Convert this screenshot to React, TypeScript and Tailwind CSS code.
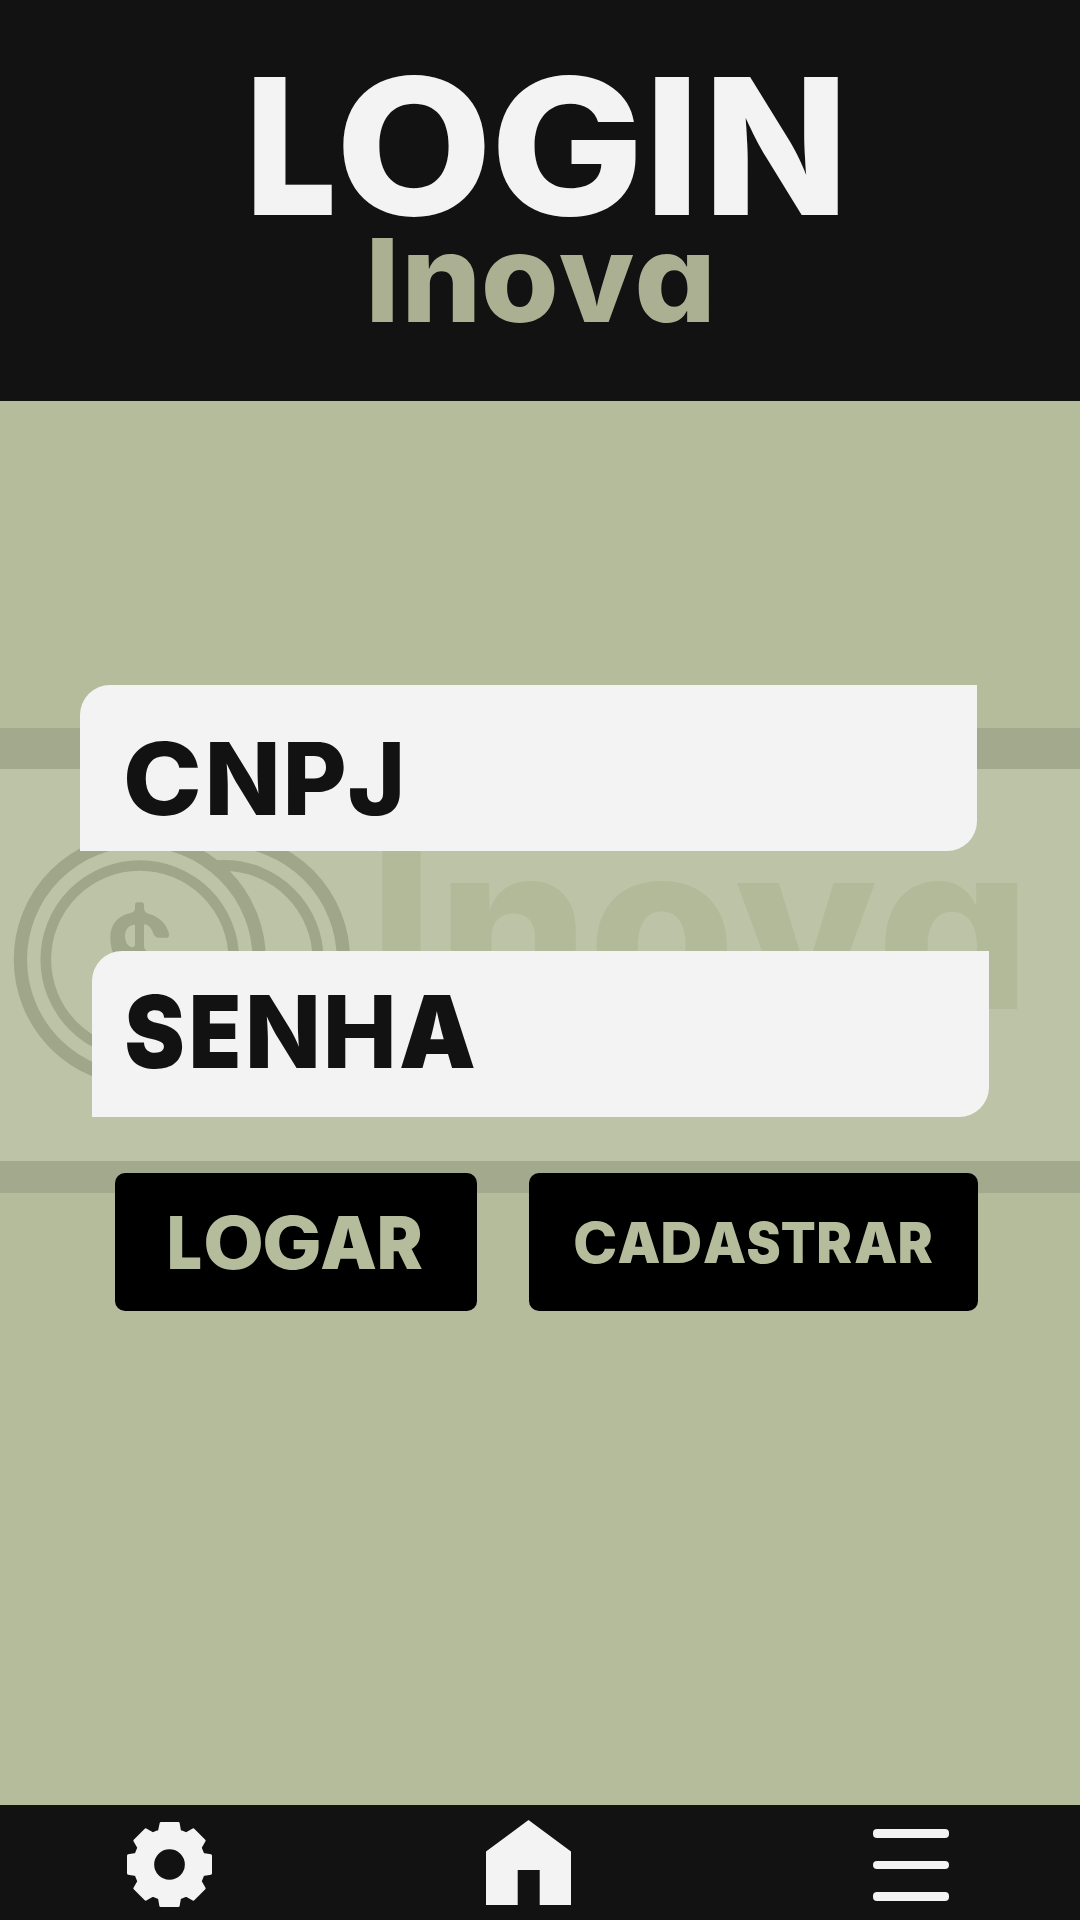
import React from "react";

// Side bearings of the ink in Inter, in em: [left, right] for each weight in use.
const INK: Record<number, Record<string, [number, number]>> = {
  800: {
    O: [0.038, 0.735], G: [0.038, 0.712], I: [0.055, 0.231], N: [0.055, 0.711],
    n: [0.053, 0.58], o: [0.033, 0.586], v: [0.01, 0.605], a: [0.03, 0.583],
    C: [0.04, 0.71], P: [0.055, 0.62], J: [0.025, 0.535], S: [0.035, 0.625],
    H: [0.055, 0.695], A: [0.02, 0.75], R: [0.055, 0.645], D: [0.055, 0.685],
    T: [0.03, 0.645],
  },
  900: { L: [0.045, 0.54], E: [0.045, 0.575], S: [0.027, 0.64], A: [0.02, 0.775], R: [0.045, 0.66] },
};

const HEAVY = Object.keys(INK[900]);

// One letter of a wordmark: character, left edge and right edge in pixels.
type Letter = [string, number, number];

type WordProps = { letters: Letter[]; size: number; className: string; xHeight?: number };

function Word({ letters, size, className, xHeight = 1 }: WordProps) {
  return (
    <span className={`flex shrink-0 whitespace-nowrap leading-none ${className}`}>
      {letters.map(([char, left, right], i) => {
        const heavy = HEAVY.includes(char);
        const [l, r] = INK[heavy ? 900 : 800][char];
        const sx = (right - left) / ((r - l) * size);
        const sy = char >= "a" ? xHeight : 1;
        const next = i + 1 < letters.length ? letters[i + 1][1] : right;
        return (
          <span
            key={i}
            className={`block origin-[0_86.4%] ${heavy ? "font-black" : "font-extrabold"}`}
            style={{
              width: next - left,
              transform: `translateX(${-l * size * sx}px) scale(${sx}, ${sy})`,
            }}
          >
            {char}
          </span>
        );
      })}
    </span>
  );
}

const LOGIN: Letter[] = [["L", 254.1, 332], ["O", 343.1, 485.1], ["G", 498.2, 636.1], ["I", 654.9, 689.2], ["N", 714.1, 838.2]];
const INOVA: Letter[] = [["I", 372, 392.9], ["n", 408.4, 474.9], ["o", 485.1, 554.9], ["v", 559.8, 632.9], ["a", 638.2, 709.2]];
const INOVA_LARGE: Letter[] = [["I", 382, 421], ["n", 450, 576], ["o", 596.3, 727.7], ["v", 736.6, 874.4], ["a", 884, 1017.6]];
const CNPJ: Letter[] = [["C", 127.4, 198.7], ["N", 210.4, 275.8], ["P", 288.2, 344], ["J", 350.5, 400.5]];
const SENHA: Letter[] = [["S", 127.1, 182.5], ["E", 193.2, 238], ["N", 250.3, 316.1], ["H", 327.8, 391.5], ["A", 400.8, 473.8]];
const LOGAR: Letter[] = [["L", 169.8, 200.1], ["O", 203.9, 259], ["G", 264.1, 317.8], ["A", 320.9, 374.7], ["R", 380.2, 422.2]];
const CADASTRAR: Letter[] = [
  ["C", 575.1, 615.1], ["A", 617.6, 658.3], ["D", 663.1, 700.1], ["A", 703.8, 744.9], ["S", 747.9, 779.3],
  ["T", 781.9, 814.1], ["R", 818.9, 851.5], ["A", 855.2, 896.2], ["R", 900.3, 932.5],
];

function Coins() {
  return (
    <svg viewBox="0 820 360 280" className="absolute left-0 top-[92px] h-[280px] w-[360px]" fill="none" stroke="#a0a68a">
      <circle cx="224" cy="959.5" r="119.4" strokeWidth="13.3" />
      <circle cx="224" cy="959.5" r="94" strokeWidth="11" />
      <circle cx="139.8" cy="959.5" r="119.4" strokeWidth="13.3" fill="#bcc3a7" />
      <circle cx="139.8" cy="959.5" r="94" strokeWidth="10.7" />
      <path
        transform="translate(0 845) scale(.33333)"
        stroke="none"
        fill="#a0a68a"
        fillRule="evenodd"
        d="M405 190V180Q405 172 412 172H425Q432 172 432 180V190Q433 202 444 206C476 213 499 235 507 266Q509 278 499 278H474Q466 278 461 268C455 250 446 239 432 238V304Q433 315 443 320V340H350C334 320 331 300 331 272C332 235 360 209 392 204Q405 201 405 190ZM405 239C385 239 375 256 375 273C375 292 385 306 397 307Q405 307 405 298Z"
      />
    </svg>
  );
}

function GearIcon() {
  return (
    <svg viewBox="0 0 255 255" className="h-[85px] w-[85px]">
      <path
        fill="#f3f3f3"
        stroke="#f3f3f3"
        strokeWidth="8"
        strokeLinejoin="round"
        d="M102 4L154 4L158 27L178 35L199 23L232 56L220 77L228 97L251 101L251 154L228 158L220 178L232 199L199 232L178 220L158 228L154 251L101 251L97 228L77 220L56 232L23 199L35 178L27 158L4 154L4 101L27 97L35 77L23 56L56 23L77 35L97 27Z"
      />
      <circle cx="127.5" cy="127.5" r="46" fill="#121212" />
    </svg>
  );
}

function HomeIcon() {
  return (
    <svg viewBox="0 0 85 85" className="h-[85px] w-[85px]">
      <path fill="#f3f3f3" d="M42.5 0L85 31.5V85H53.7V50H31.7V85H0V31.5Z" />
    </svg>
  );
}

export default function App() {
  return (
    <div className="flex h-[1920px] w-[1080px] flex-col overflow-hidden bg-[#b5bc9b] font-['Inter',sans-serif] [font-feature-settings:'cv11'] [font-kerning:none]">
      <header className="flex h-[401px] flex-col bg-[#121212] pt-[51px]">
        <h1 className="pl-[254px]">
          <Word letters={LOGIN} size={190} className="text-[190px] text-[#f3f3f3]" />
        </h1>
        <h2 className="mt-[-19px] pl-[372px]">
          <Word letters={INOVA} size={116} xHeight={1.058} className="text-[116px] text-[#aab091]" />
        </h2>
      </header>

      <main className="relative h-[1404px]">
        <div className="absolute inset-x-0 top-[327px] h-[465px] border-t-[41px] border-b-[32px] border-[#a3a98d] bg-[#bcc3a7]" />
        <div className="absolute inset-x-0 top-[327px] h-[465px]">
          <Coins />
          <div className="pl-[382px] pt-[93px]">
            <Word letters={INOVA_LARGE} size={218} xHeight={1.061} className="text-[218px] text-[#b3ba99]" />
          </div>
        </div>

        <form className="relative flex flex-col items-start pt-[284px]">
          <div className="ml-20 h-[166px] w-[897px] rounded-tl-[30px] rounded-br-[30px] bg-[#f3f3f3] pl-[47.4px] pt-[43.6px]">
            <Word letters={CNPJ} size={100} className="text-[100px] text-[#121212]" />
          </div>
          <div className="mt-[100px] ml-[92px] h-[166px] w-[897px] rounded-tl-[30px] rounded-br-[30px] bg-[#f3f3f3] pl-[35.1px] pt-[31px]">
            <Word letters={SENHA} size={100} className="text-[100px] text-[#121212]" />
          </div>
          <div className="mt-14 ml-[115px] flex gap-[52px]">
            <button type="button" className="flex h-[138px] w-[362px] items-start rounded-[10px] bg-black pl-[54.8px] pt-[33px]">
              <Word letters={LOGAR} size={73} className="text-[73px] text-[#b5bc9b]" />
            </button>
            <button type="button" className="flex h-[138px] w-[449px] items-start rounded-[10px] bg-black pl-[46.1px] pt-[41.6px]">
              <Word letters={CADASTRAR} size={56} className="text-[56px] text-[#b5bc9b]" />
            </button>
          </div>
        </form>
      </main>

      <nav className="flex h-[115px] items-start bg-[#121212] pl-[127px]">
        <div className="mt-[17px]"><GearIcon /></div>
        <div className="mt-[15px] ml-[274px]"><HomeIcon /></div>
        <div className="mt-6 ml-[302px] flex flex-col gap-[23px]">
          <span className="h-[8.67px] w-[76px] rounded-[4px] bg-[#f3f3f3]" />
          <span className="h-[8.67px] w-[76px] rounded-[4px] bg-[#f3f3f3]" />
          <span className="h-[8.67px] w-[76px] rounded-[4px] bg-[#f3f3f3]" />
        </div>
      </nav>
    </div>
  );
}
